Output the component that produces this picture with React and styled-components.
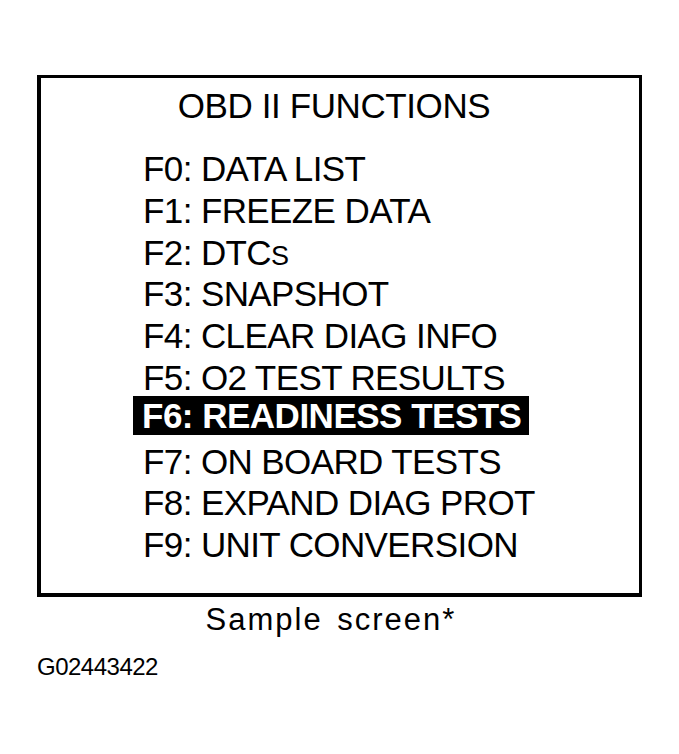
import React from 'react'
import { styled, createGlobalStyle } from 'styled-components'

const GlobalStyle = createGlobalStyle`
  html, body {
    margin: 0;
    padding: 0;
    background: #ffffff;
  }
  body {
    font-family: "Liberation Sans", Arial, sans-serif;
    color: #000000;
  }
`

const Page = styled.div`
  width: 679px;
  height: 754px;
  padding: 75px 0 0 37px;
  box-sizing: border-box;
`

const Screen = styled.div`
  width: 605px;
  height: 522px;
  box-sizing: border-box;
  border: 4px solid #000;
  border-top-width: 3px;
  border-right-width: 3px;
  padding: 7px 0 0 102px;
`

const Title = styled.h1`
  margin: 0 0 21px -102px;
  padding-right: 12px;
  font-size: 35px;
  font-weight: 400;
  line-height: 42px;
  letter-spacing: -0.4px;
  text-align: center;
`

const Menu = styled.ul`
  list-style: none;
  margin: 0;
  padding: 0;
`

const Row = styled.li`
  display: flex;
  align-items: flex-start;
  height: 41.8px;
  font-size: 35px;
  line-height: 42px;
  letter-spacing: -0.6px;
`

const Label = styled.span`
  ${props => props.selected && `
    background: #000;
    color: #fff;
    font-weight: 700;
    letter-spacing: -0.5px;
    line-height: 39px;
    margin: -3px 0 0 -10px;
    padding: 0 8px 0 9px;
  `}
`

const Caption = styled.div`
  width: 605px;
  margin-top: 5px;
  padding-right: 17px;
  box-sizing: border-box;
  font-size: 31px;
  line-height: 36px;
  letter-spacing: 2px;
  word-spacing: 4px;
  text-align: center;
`

const FigureId = styled.div`
  margin-top: 15px;
  font-size: 24px;
  line-height: 28px;
  letter-spacing: -0.5px;
`

const items = [
  'F0: DATA LIST',
  'F1: FREEZE DATA',
  'F2: DTCs',
  'F3: SNAPSHOT',
  'F4: CLEAR DIAG INFO',
  'F5: O2 TEST RESULTS',
  'F6: READINESS TESTS',
  'F7: ON BOARD TESTS',
  'F8: EXPAND DIAG PROT',
  'F9: UNIT CONVERSION',
]

const SmallCaps = styled.span`
  font-size: 27px;
`

const renderLabel = text => {
  if (text.endsWith('DTCs')) {
    return <>F2: DTC<SmallCaps>S</SmallCaps></>
  }
  return text
}

const App = () => {
  return (
    <>
      <GlobalStyle />
      <Page>
        <Screen>
          <Title>OBD II FUNCTIONS</Title>
          <Menu>
            {items.map((item, i) => (
              <Row key={item}>
                <Label selected={i === 6}>{renderLabel(item)}</Label>
              </Row>
            ))}
          </Menu>
        </Screen>
        <Caption>Sample screen*</Caption>
        <FigureId>G02443422</FigureId>
      </Page>
    </>
  )
}

export default App
